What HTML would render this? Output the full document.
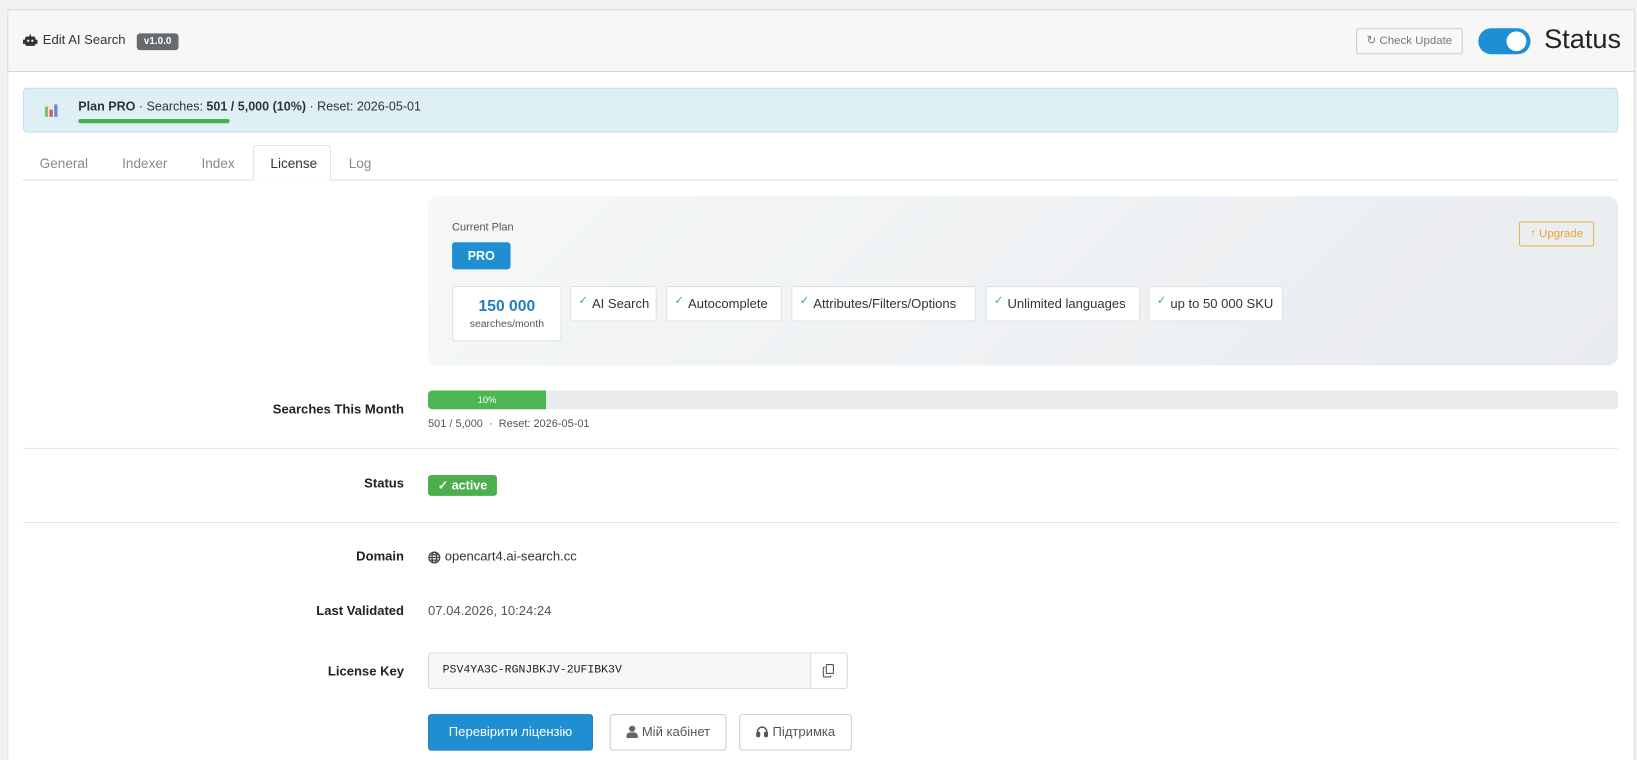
<!DOCTYPE html>
<html><head><meta charset="utf-8">
<style>
html,body{margin:0;padding:0;width:1637px;height:760px;overflow:hidden;background:#f1f1f1;}
#s{position:absolute;left:0;top:0;width:1568px;height:728px;overflow:hidden;transform:scale(1.044);transform-origin:0 0;font-family:"Liberation Sans",sans-serif;color:#333;}
.a{position:absolute;}
.card{left:7px;top:9px;width:1559px;height:740px;background:#fff;border:1px solid #dcdcdc;box-sizing:border-box;}
.hdr{left:7px;top:9px;width:1559px;height:60px;background:#f7f7f7;border:1px solid #dcdcdc;border-bottom:1px solid #d6d6d6;box-sizing:border-box;}
.lbl{right:1181px;font-weight:bold;font-size:12.5px;color:#222;text-align:right;white-space:nowrap;}
.tag{top:274px;height:34px;background:#fff;border:1px solid #dde1e4;border-radius:3px;box-sizing:border-box;font-size:12.5px;line-height:33px;padding-left:20px;color:#333;white-space:nowrap;}
.tag:before{content:"✓";position:absolute;left:7px;top:-3px;color:#4caf50;font-size:11px;}
.hr{left:22px;width:1528px;height:1px;background:#e6e6e6;}
.btn{top:684px;height:35px;border:1px solid #ccc;border-radius:3px;box-sizing:border-box;font-size:12.5px;line-height:33px;text-align:center;color:#555;background:#fff;}
.btn svg{vertical-align:-2px;margin-right:4px}
</style></head><body><div id="s">
<div class="a card"></div>
<div class="a hdr"></div>
<svg class="a" style="left:22px;top:33px" width="14" height="12" viewBox="0 0 14 12"><rect x="2" y="2" width="10" height="9" rx="2" fill="#333"/><rect x="0" y="5" width="2" height="4" fill="#333"/><rect x="12" y="5" width="2" height="4" fill="#333"/><rect x="6.3" y="0" width="1.4" height="2" fill="#333"/><circle cx="5" cy="6" r="1.1" fill="#fff"/><circle cx="9" cy="6" r="1.1" fill="#fff"/></svg>
<div class="a" style="left:41px;top:31px;font-size:12.5px;color:#333">Edit AI Search</div>
<div class="a" style="left:131px;top:32px;width:40px;height:16px;background:#666b70;border-radius:3px;color:#fff;font-size:9.5px;font-weight:bold;text-align:center;line-height:16px">v1.0.0</div>
<div class="a" style="left:1299px;top:27px;width:102px;height:25px;border:1px solid #ccc;border-radius:2px;box-sizing:border-box;font-size:11px;color:#777;line-height:23px;text-align:center;background:#f9f9f9">↻ Check Update</div>
<div class="a" style="left:1416px;top:27px;width:50px;height:25px;background:#1e8fd3;border-radius:13px"></div>
<div class="a" style="left:1443px;top:30px;width:19px;height:19px;background:#fff;border-radius:50%"></div>
<div class="a" style="left:1479px;top:22px;font-size:26px;color:#222">Status</div>

<div class="a" style="left:22px;top:84px;width:1528px;height:43px;background:#dfeff6;border:1px solid #bfe0ec;border-radius:4px;box-sizing:border-box"></div>
<svg class="a" style="left:42px;top:98px" width="14" height="14" viewBox="0 0 14 14"><rect x="0" y="0" width="14" height="14" fill="#e8e8e8"/><rect x="1" y="4" width="3" height="10" fill="#7cc36e"/><rect x="5.5" y="7" width="3" height="7" fill="#e0505c"/><rect x="10" y="2" width="3" height="12" fill="#4d8fe0"/></svg>
<div class="a" style="left:75px;top:95px;font-size:12px;color:#333;white-space:nowrap"><b>Plan PRO</b> · Searches: <b>501 / 5,000 (10%)</b> · Reset: 2026-05-01</div>
<div class="a" style="left:75px;top:114px;width:145px;height:4px;background:#3fb54a;border-radius:2px"></div>

<div class="a" style="left:22px;top:172px;width:1528px;height:1px;background:#ddd"></div>
<div class="a" style="left:242px;top:139px;width:75px;height:34px;background:#fff;border:1px solid #ddd;border-bottom:none;border-radius:3px 3px 0 0;box-sizing:border-box"></div>
<div class="a" style="left:38px;top:149px;font-size:13px;color:#8a8a8a">General</div>
<div class="a" style="left:117px;top:149px;font-size:13px;color:#8a8a8a">Indexer</div>
<div class="a" style="left:193px;top:149px;font-size:13px;color:#8a8a8a">Index</div>
<div class="a" style="left:259px;top:149px;font-size:13px;color:#333">License</div>
<div class="a" style="left:334px;top:149px;font-size:13px;color:#8a8a8a">Log</div>

<div class="a" style="left:410px;top:188px;width:1140px;height:162px;border-radius:10px;background:linear-gradient(135deg,#f5f7f8,#e9ecef)"></div>
<div class="a" style="left:433px;top:212px;font-size:10.5px;color:#555">Current Plan</div>
<div class="a" style="left:433px;top:232px;width:56px;height:26px;background:#1f8fd1;border-radius:3px;color:#fff;font-weight:bold;font-size:12px;line-height:26px;text-align:center">PRO</div>
<div class="a" style="left:1455px;top:212px;width:72px;height:24px;border:1px solid #f0ad4e;border-radius:2px;box-sizing:border-box;color:#f0a030;font-size:11px;line-height:22px;text-align:center">↑ Upgrade</div>
<div class="a" style="left:433px;top:274px;width:105px;height:53px;background:#fff;border:1px solid #dde1e4;border-radius:3px;box-sizing:border-box;text-align:center">
 <div style="margin-top:10px;font-size:15px;font-weight:bold;color:#1f7fc0">150 000</div>
 <div style="font-size:10px;color:#555;margin-top:3px">searches/month</div></div>
<div class="a tag" style="left:546px;width:83px">AI Search</div>
<div class="a tag" style="left:638px;width:111px">Autocomplete</div>
<div class="a tag" style="left:758px;width:177px">Attributes/Filters/Options</div>
<div class="a tag" style="left:944px;width:148px">Unlimited languages</div>
<div class="a tag" style="left:1100px;width:129px">up to 50 000 SKU</div>

<div class="a lbl" style="top:385px">Searches This Month</div>
<div class="a" style="left:410px;top:374px;width:1140px;height:18px;background:#e9ecef;border-radius:4px"></div>
<div class="a" style="left:410px;top:374px;width:113px;height:18px;background:#4cb652;border-radius:4px 0 0 4px;color:#fff;font-size:9px;line-height:18px;text-align:center">10%</div>
<div class="a" style="left:410px;top:400px;font-size:10.5px;color:#555;white-space:nowrap">501 / 5,000 &nbsp;·&nbsp; Reset: 2026-05-01</div>
<div class="a hr" style="top:429px"></div>

<div class="a lbl" style="top:456px">Status</div>
<div class="a" style="left:410px;top:455px;width:66px;height:20px;background:#4cae4c;border-radius:3px;color:#fff;font-weight:bold;font-size:12px;line-height:20px;text-align:center">✓ active</div>
<div class="a hr" style="top:500px"></div>

<div class="a lbl" style="top:526px">Domain</div>
<svg class="a" style="left:410px;top:528px" width="12" height="12" viewBox="0 0 12 12" fill="none" stroke="#444" stroke-width="1.2"><circle cx="6" cy="6" r="5.2"/><ellipse cx="6" cy="6" rx="2.2" ry="5.2"/><path d="M1 6h10M1.8 3.5h8.4M1.8 8.5h8.4"/></svg>
<div class="a" style="left:426px;top:526px;font-size:12.5px;color:#333">opencart4.ai-search.cc</div>
<div class="a lbl" style="top:578px">Last Validated</div>
<div class="a" style="left:410px;top:578px;font-size:12.5px;color:#555">07.04.2026, 10:24:24</div>
<div class="a lbl" style="top:636px">License Key</div>
<div class="a" style="left:410px;top:625px;width:402px;height:35px;background:#f7f7f7;border:1px solid #ddd;border-radius:3px;box-sizing:border-box"></div>
<div class="a" style="left:776px;top:625px;width:36px;height:35px;background:#fff;border:1px solid #ddd;border-radius:0 3px 3px 0;box-sizing:border-box"></div>
<svg class="a" style="left:788px;top:636px" width="11" height="13" viewBox="0 0 11 13" fill="none" stroke="#555" stroke-width="1.1"><rect x="3.5" y="0.6" width="6.8" height="8.5" rx="1"/><path d="M2 3.2H1.2a.6.6 0 0 0-.6.6v8a.6.6 0 0 0 .6.6h6a.6.6 0 0 0 .6-.6V11"/></svg>
<div class="a" style="left:424px;top:636px;font-family:'Liberation Mono',monospace;font-size:11px;color:#222">PSV4YA3C-RGNJBKJV-2UFIBK3V</div>

<div class="a btn" style="left:410px;width:158px;background:#1f8fd1;border-color:#1a80bd;color:#fff">Перевірити ліцензію</div>
<div class="a btn" style="left:584px;width:112px"><svg width="11" height="12" viewBox="0 0 11 12"><circle cx="5.5" cy="3" r="3" fill="#666"/><path d="M0 12v-2a3.5 3.5 0 0 1 3.5-3.5h4A3.5 3.5 0 0 1 11 10v2z" fill="#666"/></svg>Мій кабінет</div>
<div class="a btn" style="left:708px;width:108px"><svg width="12" height="12" viewBox="0 0 12 12" fill="none" stroke="#555" stroke-width="1.4"><path d="M1.5 8V6a4.5 4.5 0 0 1 9 0v2"/><rect x="1" y="6.5" width="2.5" height="4" rx="1" fill="#555"/><rect x="8.5" y="6.5" width="2.5" height="4" rx="1" fill="#555"/></svg>Підтримка</div>
</div></body></html>
